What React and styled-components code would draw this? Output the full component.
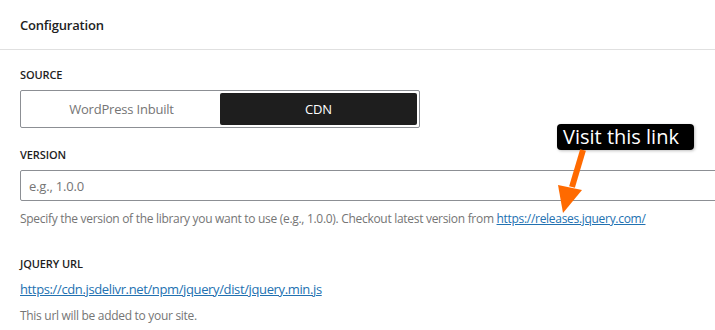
import React from "react";
import styled, { createGlobalStyle } from "styled-components";

const Global = createGlobalStyle`
  html, body { margin: 0; padding: 0; background: #fff; overflow: hidden; }
  body { font-family: "Open Sans", "Noto Sans", sans-serif; color: #1e1e1e; }
`;

const Page = styled.div`
  position: relative;
  width: 715px;
  height: 330px;
  overflow: hidden;
`;

const Header = styled.div`
  height: 50px;
  box-sizing: border-box;
  padding: 0 20px;
  display: flex;
  align-items: center;
  border-bottom: 1px solid #e0e0e0;
  font-size: 13px;
  font-weight: 600;
  letter-spacing: -0.2px;
`;

const Body = styled.div`
  padding: 17px 0 0 20px;
  display: flex;
  flex-direction: column;
`;

const Field = styled.div`
  display: flex;
  flex-direction: column;
  margin-bottom: ${(p) => p.$mb || 0}px;
`;

const Label = styled.div`
  font-size: 11px;
  font-weight: 600;
  text-transform: uppercase;
  line-height: 16px;
  margin-bottom: ${(p) => p.$mb || 8}px;
  letter-spacing: -0.1px;
`;

const Toggle = styled.div`
  width: 400px;
  height: 38px;
  box-sizing: border-box;
  border: 1px solid #8c8f94;
  border-radius: 2px;
  padding: 2px;
  display: flex;
`;

const ToggleOption = styled.button`
  flex: 1;
  border: none;
  border-radius: 2px;
  background: ${(p) => (p.$active ? "#1e1e1e" : "transparent")};
  color: ${(p) => (p.$active ? "#fff" : "#757575")};
  font-family: inherit;
  font-size: 13px;
  letter-spacing: -0.2px;
  cursor: pointer;
  padding: 0;
`;

const Input = styled.input`
  width: 720px;
  height: 31px;
  box-sizing: border-box;
  border: 1px solid #8c8f94;
  border-radius: 2px;
  padding: 0 8px;
  font-family: inherit;
  font-size: 13px;
  letter-spacing: -0.2px;
  color: #1e1e1e;
  outline: none;
  &::placeholder { color: #757575; }
`;

const Help = styled.div`
  font-size: 12px;
  line-height: 16px;
  color: #757575;
  margin-top: ${(p) => p.$mt || 10}px;
  letter-spacing: -0.3px;
  white-space: nowrap;
`;

const Link = styled.a`
  color: #2271b1;
  text-decoration: underline;
`;

const UrlLine = styled.div`
  font-size: 13px;
  line-height: 18px;
  letter-spacing: -0.37px;
`;

const Tooltip = styled.div`
  position: absolute;
  left: 557px;
  top: 124px;
  width: 137px;
  height: 26px;
  box-sizing: border-box;
  padding-left: 6px;
  background: #000;
  border-radius: 4px;
  color: #fff;
  font-size: 20px;
  line-height: 26px;
  letter-spacing: 0px;
  box-shadow: 1px 1px 3px rgba(0, 0, 0, 0.25);
`;

const Arrow = styled.svg`
  position: absolute;
  left: 550px;
  top: 145px;
  overflow: visible;
`;

export default function App() {
  return (
    <>
      <Global />
      <Page>
        <Header>Configuration</Header>
        <Body>
          <Field $mb={19}>
            <Label $mb={7}>Source</Label>
            <Toggle>
              <ToggleOption>WordPress Inbuilt</ToggleOption>
              <ToggleOption $active>CDN</ToggleOption>
            </Toggle>
          </Field>
          <Field $mb={29}>
            <Label $mb={7}>Version</Label>
            <Input placeholder="e.g., 1.0.0" />
            <Help>
              Specify the version of the library you want to use (e.g., 1.0.0). Checkout latest version from{" "}
              <Link href="#">https://releases.jquery.com/</Link>
            </Help>
          </Field>
          <Field>
            <Label $mb={8}>jQuery URL</Label>
            <UrlLine>
              <Link href="#">https://cdn.jsdelivr.net/npm/jquery/dist/jquery.min.js</Link>
            </UrlLine>
            <Help $mt={10}>This url will be added to your site.</Help>
          </Field>
        </Body>
        <Tooltip>Visit this link</Tooltip>
        <Arrow width="40" height="70" viewBox="0 0 40 70">
          <path d="M33 5 L22 42" stroke="#ff6a00" strokeWidth="6" strokeLinecap="butt" fill="none" />
          <polygon points="8,40 32,45 13,68" fill="#ff6a00" />
        </Arrow>
      </Page>
    </>
  );
}
